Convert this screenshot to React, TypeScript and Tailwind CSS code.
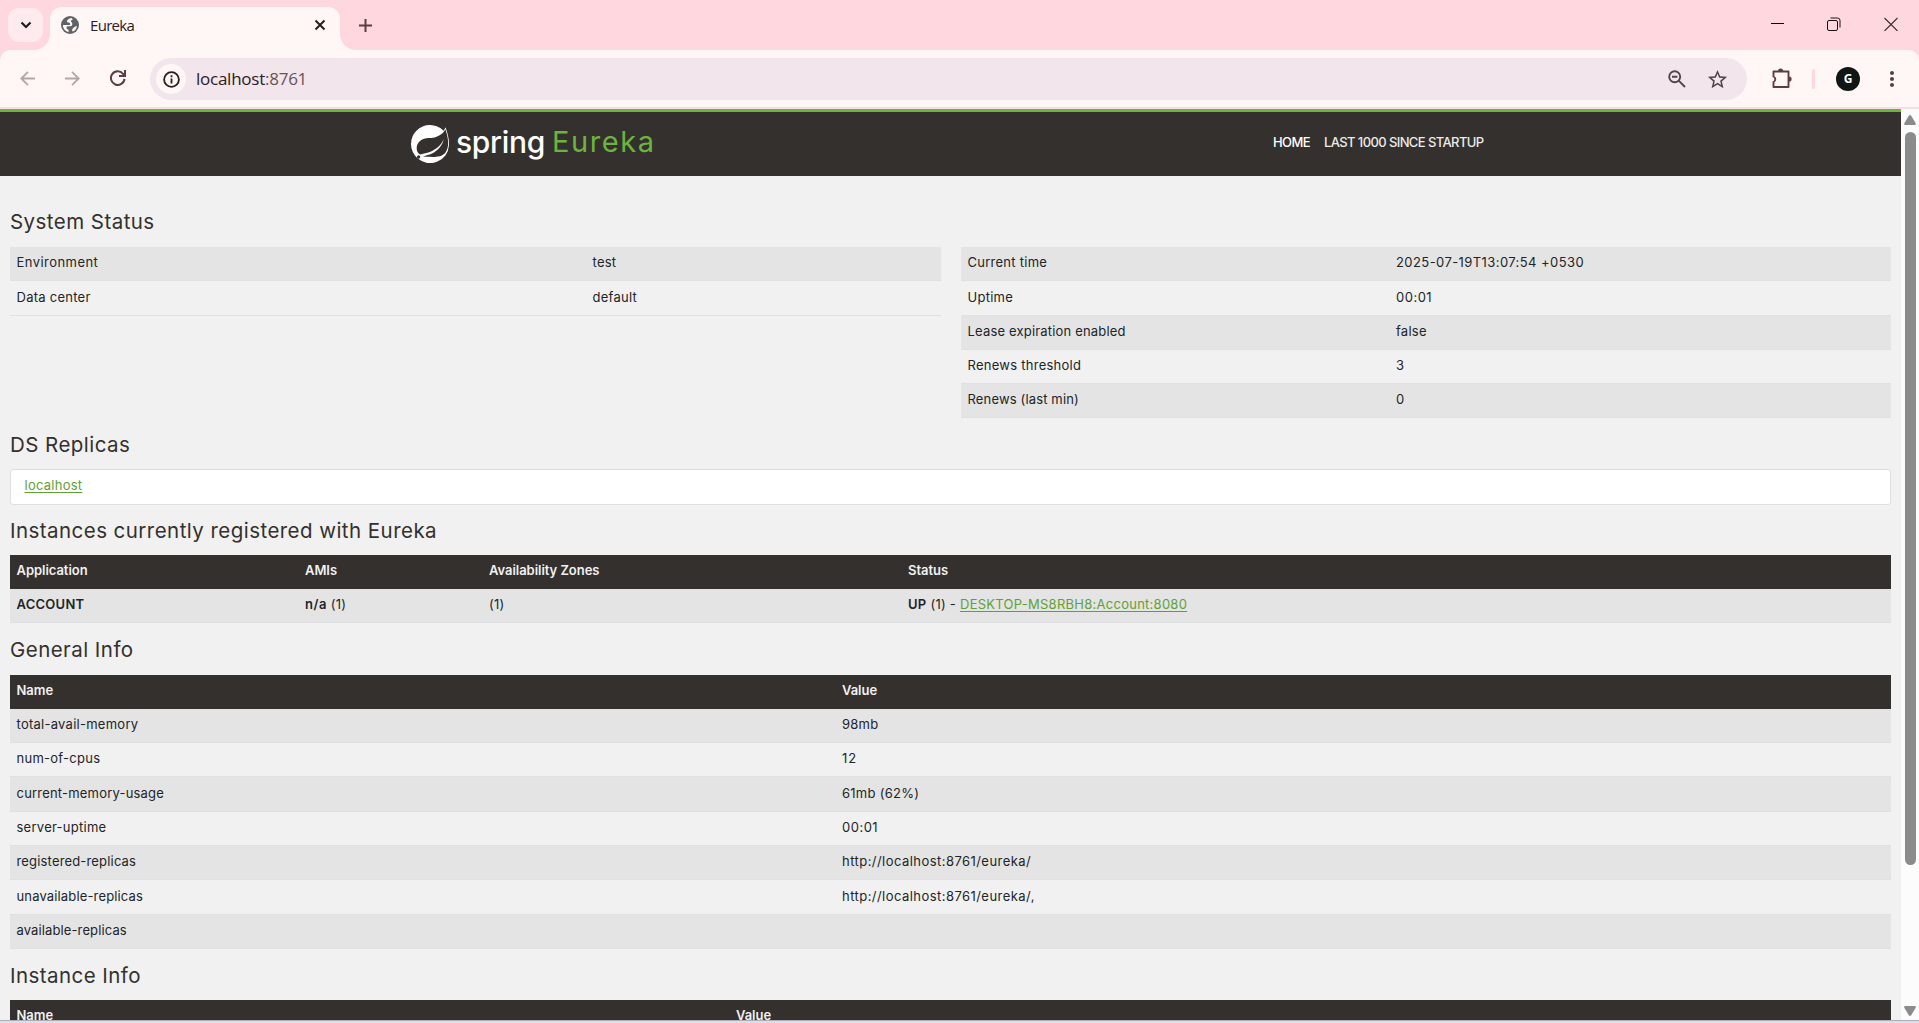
import type { ReactNode } from "react";
import { SiSpring } from "react-icons/si";
import { MdMoreVert, MdStarBorder } from "react-icons/md";

const tint = "text-[#5b3d42]";

function TabStrip() {
  return (
    <div className="flex h-[50px] shrink-0 bg-[#fed7df]">
      <button className="mt-2 ml-2 flex h-[34px] w-[35px] items-center justify-center rounded-[11px] bg-[#ffebee]">
        <svg width="12" height="8" viewBox="0 0 12 8" fill="none" stroke="#241a1c" strokeWidth="2.2">
          <path d="M1.5 1.5 6 6l4.500-4.500" />
        </svg>
      </button>
      <div className="relative mt-[7px] ml-[7px] flex h-[43px] w-[290px] items-center rounded-t-[12px] bg-[#fff7f5] pr-[14px] pl-[11px]">
        <svg className="absolute bottom-0 -left-[16px]" width="16" height="16" viewBox="0 0 16 16" fill="#fff7f5">
          <path d="M16 0v16H0A16 16 0 0 0 16 0z" />
        </svg>
        <svg className="absolute -right-[16px] bottom-0" width="16" height="16" viewBox="0 0 16 16" fill="#fff7f5">
          <path d="M0 0v16h16A16 16 0 0 1 0 0z" />
        </svg>
        <svg className="-mt-[7px]" width="18" height="18" viewBox="0 0 18 18">
          <circle cx="9" cy="9" r="9" fill="#5f6368" />
          <path d="M10.300 1.900C8 2.200 5.900 3.600 5.900 5.300c0 1.900 3.300 1 3.300 2.600 0 1.500-1.200 1.200-2.600 1.200H1.900c0 3.500 2.300 6.300 5.600 7l.2-2.300c-1.300-.3-2.200-.8-2.200-2 0-1.100.8-1.500 2.300-1.500 2 0 3.500-.5 3.500-2.400 0-1.600-1.400-1.700-1.400-2.800 0-.9 1.300-.7 1.700-1.300.3-.5-.4-1.200-1.300-1.900zM12 12.200c1.200-.9 2-2.100 3.900-2.300-.2 2.600-1.800 4.800-4.200 5.700-.9-.7-.8-2.500.3-3.400z" fill="#fff7f5" />
        </svg>
        <span className="-mt-[8px] ml-[11px] font-['Open_Sans',sans-serif] text-[15px] leading-5 tracking-[-0.7px] text-[#2a1c1f]">Eureka</span>
        <svg className="-mt-[7px] ml-auto" width="12" height="12" viewBox="0 0 12 12" stroke="#2a1c1f" strokeWidth="2">
          <path d="m1.500 1.500 9 9m0-9-9 9" />
        </svg>
      </div>
      <svg className="mt-[19px] ml-[19px]" width="13" height="13" viewBox="0 0 13 13" stroke="#5b3d42" strokeWidth="2">
        <path d="M6.500 0v13M0 6.500h13" />
      </svg>
      <div className="mt-[17px] mr-[21px] ml-auto flex gap-[43px]">
        <svg width="14" height="14" viewBox="0 0 14 14" stroke="#000">
          <path d="M1 6.500h13" />
        </svg>
        <svg width="14" height="14" viewBox="0 0 14 14" fill="none" stroke="#1a1214">
          <rect x=".5" y="3.500" width="10" height="10" rx="1.500" />
          <path d="M3.500 1h7A2.500 2.500 0 0 1 13 3.500v7" />
        </svg>
        <svg width="14" height="14" viewBox="0 0 14 14" stroke="#3c2e31" strokeWidth="1.100">
          <path d="m.5 1 13 13m0-13-13 13" />
        </svg>
      </div>
    </div>
  );
}

function Toolbar() {
  return (
    <div className="h-[59px] shrink-0 border-b-2 border-[#f4dee2] bg-[#fed7df]">
      <div className="flex h-full items-center rounded-t-[10px] bg-[#fff7f5] pt-px">
        <svg className="-mt-[1px] ml-[20px]" width="15" height="15" viewBox="0 0 15 15" fill="none" stroke="#b5a5a7" strokeWidth="1.800">
          <path d="M15 7.500H1.500M8 .8 1.300 7.500 8 14.200" />
        </svg>
        <svg className="-mt-[1px] ml-[30px]" width="15" height="15" viewBox="0 0 15 15" fill="none" stroke="#b5a5a7" strokeWidth="1.800">
          <path d="M0 7.500h13.500M7 .8l6.700 6.700L7 14.200" />
        </svg>
        <svg className="-mt-[2px] ml-[30px]" width="16" height="16" viewBox="0 0 16 16" fill="none" stroke="#5b3d42" strokeWidth="2">
          <path d="M14.500 8.800A6.800 6.800 0 1 1 13 3.800l1.400 1.400M15 0v6H9" />
        </svg>
        <div className="ml-[24px] flex h-[42px] w-[1597px] items-center rounded-full bg-[#f2e5eb] pr-[18px] pl-[6px]">
          <div className="flex size-[30px] items-center justify-center rounded-full bg-[#fff7f5]">
            <svg width="17" height="17" viewBox="0 0 17 17" fill="none" stroke="#2a1c1f" strokeWidth="1.800">
              <circle cx="8.500" cy="8.500" r="7.400" />
              <path d="M8.500 7.500v5M8.500 4.300v2" />
            </svg>
          </div>
          <span className="ml-[10px] font-['Open_Sans',sans-serif] text-[17px] tracking-[-0.25px] text-[#2a1c1f]">
            localhost<span className="text-[#67545a]">:8761</span>
          </span>
          <svg className="ml-auto" width="18" height="18" viewBox="0 0 18 18" fill="none" stroke="#54434a" strokeWidth="1.900">
            <circle cx="6.700" cy="6.700" r="5.500" />
            <path d="m10.700 10.700 6.300 6.300M4 6.700h5.400" />
          </svg>
          <MdStarBorder className="ml-[20px] size-[23px] text-[#54434a]" />
        </div>
        <svg className="-mt-[2px] ml-[24px]" width="21" height="21" viewBox="0 0 21 21">
          <path d="M2.500 3.500h15v15.500h-15v-5a3 3 0 0 0 0-5.500z" fill="none" stroke="#5b3d42" strokeWidth="1.900" strokeLinejoin="round" />
          <path d="M7 3a2.600 2.600 0 0 1 5.200 0zM18 8.500a2.600 2.600 0 0 1 0 5.200z" fill="#5b3d42" />
        </svg>
        <div className="ml-[20px] h-5 w-[3px] rounded-full bg-[#fed7df]" />
        <div className="-mt-[1px] ml-[21px] flex size-[24px] items-center justify-center rounded-full bg-[#111514] font-['Open_Sans',sans-serif] text-[12px] font-bold text-white">G</div>
        <MdMoreVert className={`-mt-[1px] ml-[20px] size-[24px] ${tint}`} />
      </div>
    </div>
  );
}

function Header() {
  return (
    <div className="flex h-[67px] border-t-[3px] border-[#6db33f] bg-[#34302d] pl-[411px]">
      <SiSpring className="mt-[13px] size-[38px] text-white" />
      <span className="mt-[11px] ml-[7px] w-[96px] text-[30px] leading-[38px] font-medium tracking-[-0.3px] text-white">spring</span>
      <span className="mt-[11px] w-[104px] text-[29px] leading-[38px] tracking-[1.600px] text-[#6db33f]">Eureka</span>
      <div className="mt-[18px] ml-[617px] flex text-[13px] leading-6 font-medium text-white">
        <span className="w-[51px] tracking-[-0.6px]">HOME</span>
        <span className="tracking-[-0.600px] text-[#ebebeb]">LAST 1000 SINCE STARTUP</span>
      </div>
    </div>
  );
}

function Heading({ children }: { children: ReactNode }) {
  return <h1 className="text-[20.500px] leading-[25px] tracking-[0.450px] text-[#34302d]">{children}</h1>;
}

function Row({ cols, cells, odd }: { cols: string; cells: ReactNode[]; odd: boolean }) {
  return (
    <div className={`grid h-[34.300px] border-b border-[#dee0e2] pt-[5.300px] pl-[6.500px] leading-5 ${cols} ${odd ? "bg-[#e4e4e4]" : ""}`}>
      {cells.map((c, i) => (
        <div key={i}>{c}</div>
      ))}
    </div>
  );
}

function Table({ cols, head, rows, headHeight = "h-[34px]" }: { cols: string; head?: string[]; rows: ReactNode[][]; headHeight?: string }) {
  return (
    <div>
      {head && (
        <div className={`grid bg-[#34302d] pt-[5px] pl-[6.500px] leading-5 font-semibold tracking-[-0.040px] text-[#f1f1f1] ${cols} ${headHeight}`}>
          {head.map((h) => (
            <div key={h}>{h}</div>
          ))}
        </div>
      )}
      {rows.map((r, i) => (
        <Row key={i} cols={cols} cells={r} odd={i % 2 === 0} />
      ))}
    </div>
  );
}

function Link({ children }: { children: ReactNode }) {
  return <a className="text-[#5fa134] underline underline-offset-2">{children}</a>;
}

const environment = [
  [<span className="tracking-[0.450px]">Environment</span>, "test"],
  ["Data center", "default"],
];

const timing = [
  ["Current time", <span className="tracking-[0.420px]">2025-07-19T13:07:54 +0530</span>],
  ["Uptime", <span className="tracking-[0.500px]">00:01</span>],
  [<span className="tracking-[0.180px]">Lease expiration enabled</span>, "false"],
  ["Renews threshold", "3"],
  [<span className="tracking-[0.150px]">Renews (last min)</span>, "0"],
];

const instances = [
  [
    <b className="font-semibold tracking-[0.250px]">ACCOUNT</b>,
    <><b className="font-semibold tracking-[0.500px]">n/a</b> (1)</>,
    "(1)",
    <><b className="font-semibold">UP</b> (1) - <Link>DESKTOP-MS8RBH8:Account:8080</Link></>,
  ],
];

const general = [
  ["total-avail-memory", "98mb"],
  ["num-of-cpus", <span className="tracking-[1px]">12</span>],
  [<span className="tracking-[0.200px]">current-memory-usage</span>, "61mb (62%)"],
  ["server-uptime", <span className="tracking-[0.500px]">00:01</span>],
  [<span className="tracking-[0.170px]">registered-replicas</span>, <span className="tracking-[0.450px]">http://localhost:8761/eureka/</span>],
  [<span className="tracking-[0.150px]">unavailable-replicas</span>, <span className="tracking-[0.450px]">http://localhost:8761/eureka/,</span>],
  [<span className="tracking-[0.120px]">available-replicas</span>, ""],
];

function Scrollbar() {
  return (
    <div className="flex w-[18px] shrink-0 flex-col items-center bg-[#fcfcfc] pt-[6px] pb-1">
      <svg width="12" height="10" viewBox="0 0 12 10" fill="#8b8b8b">
        <path d="M4.800.8Q6-.6 7.200.8l4.500 7.500Q12 10 11 10H1q-1 0-.7-1.700z" />
      </svg>
      <div className="mt-[7px] h-[733px] w-[11px] rounded-full bg-[#8b8b8b]" />
      <svg className="mt-auto" width="12" height="10" viewBox="0 0 12 10" fill="#8b8b8b">
        <path d="M4.800 9.200q1.200 1.400 2.400 0l4.500-7.500Q12 0 11 0H1Q0 0 .3 1.700z" />
      </svg>
    </div>
  );
}

export default function App() {
  return (
    <div className="flex h-[1023px] w-[1919px] flex-col overflow-hidden bg-[#f1f1f1] font-['Inter',sans-serif]">
      <TabStrip />
      <Toolbar />
      <div className="flex h-[911px] shrink-0 overflow-hidden">
        <div className="w-[1901px] shrink-0">
          <Header />
          <div className="px-[10px] pt-[33px] text-[13px] tracking-[0.260px] text-[#212529]">
            <Heading>System Status</Heading>
            <div className="mt-[13px] grid h-[185px] grid-cols-[931px_930px] gap-5">
              <Table cols="grid-cols-[576px_1fr]" rows={environment} />
              <Table cols="grid-cols-[428.500px_1fr]" rows={timing} />
            </div>
            <div className="h-[37px]">
              <Heading>DS Replicas</Heading>
            </div>
            <div className="mb-[13px] h-[36px] rounded-[3px] border border-[#dfdfdf] bg-white px-[13.500px] pt-[5px] leading-5">
              <Link>localhost</Link>
            </div>
            <div className="h-[37px]">
              <Heading>Instances currently registered with Eureka</Heading>
            </div>
            <Table
              cols="grid-cols-[288.500px_184px_419px_1fr]"
              head={["Application", "AMIs", "Availability Zones", "Status"]}
              rows={instances}
            />
            <div className="h-[51.700px] pt-[14px]">
              <Heading>General Info</Heading>
            </div>
            <Table cols="grid-cols-[825.500px_1fr]" headHeight="h-[33.900px]" head={["Name", "Value"]} rows={general} />
            <div className="h-[50.900px] pt-[14px]">
              <Heading>Instance Info</Heading>
            </div>
            <Table cols="grid-cols-[719.500px_1fr]" head={["Name", "Value"]} rows={[]} />
          </div>
        </div>
        <Scrollbar />
      </div>
      <div className="h-[3px] shrink-0 border-t border-[#aeadb3] bg-[#dddeea]" />
    </div>
  );
}
